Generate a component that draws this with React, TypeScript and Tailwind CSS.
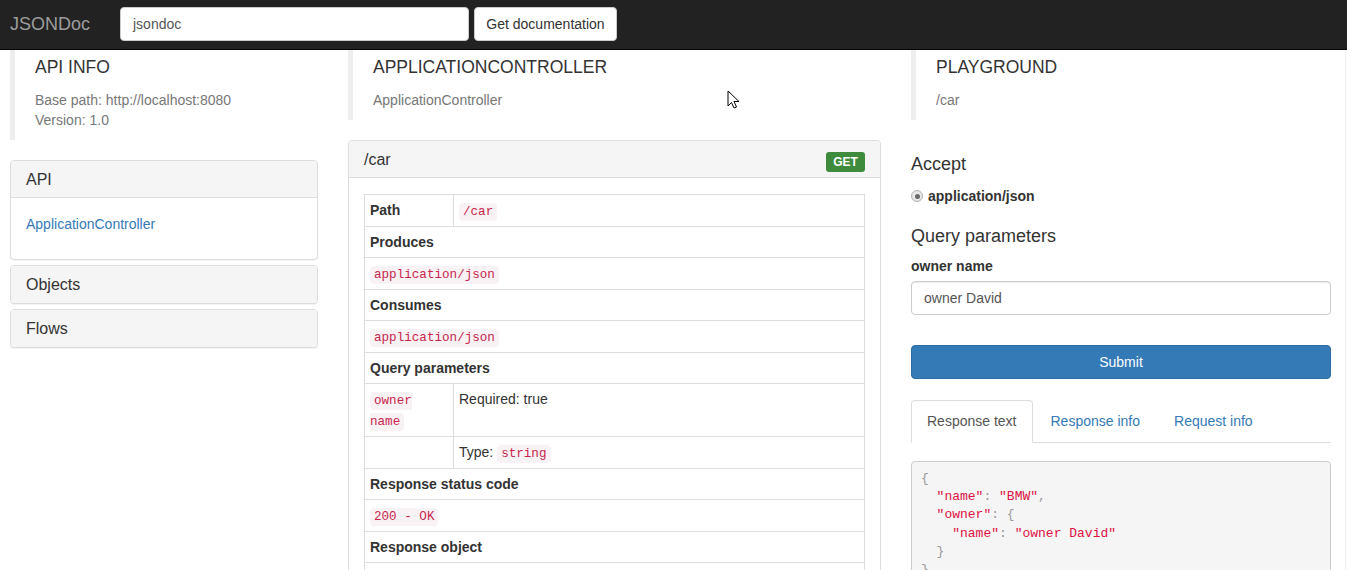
const sans = { fontFamily: '"Liberation Sans", Arial, sans-serif' }

function Code({ children }: { children: React.ReactNode }) {
  return (
    <code className="rounded-[4px] bg-[#f9f2f4] px-[4px] py-[2px] font-['Liberation_Mono',monospace] text-[12.6px] leading-[18px] text-[#c7254e]">
      {children}
    </code>
  )
}

function Callout({ title, lines }: { title: string; lines: string[] }) {
  return (
    <div className="mb-[20px] border-l-[5px] border-[#eee] pb-[10px] pl-[20px] pt-[7px]">
      <div className="text-[17.5px] leading-[20px] text-[#333]">{title}</div>
      <div className="mt-[13px] text-[14px] leading-[20px] text-[#777]">
        {lines.map((l) => (
          <div key={l}>{l}</div>
        ))}
      </div>
    </div>
  )
}

function Navbar() {
  return (
    <nav className="flex h-[50px] items-center border-b border-[#080808] bg-[#222] pb-[1px]">
      <div className="w-[120px] pl-[10px] text-[18px] text-[#9d9d9d]">JSONDoc</div>
      <div className="flex h-[34px] w-[349px] items-center rounded-[4px] border border-[#ccc] bg-white px-[12px] text-[14px] text-[#555]">
        jsondoc
      </div>
      <button className="ml-[5px] h-[34px] w-[143px] rounded-[4px] border border-[#ccc] bg-white text-[14px] text-[#333]">
        Get documentation
      </button>
    </nav>
  )
}

function SidePanel({ title, children }: { title: string; children?: React.ReactNode }) {
  return (
    <div className="mt-[5px] overflow-hidden rounded-[4px] border border-[#ddd] bg-white shadow-[0_1px_1px_rgba(0,0,0,0.05)] first:mt-0">
      <div className={`flex h-[37px] items-center bg-[#f5f5f5] px-[15px] pt-[1px] text-[16px] text-[#333] ${children ? 'border-b border-[#ddd]' : ''}`}>
        {title}
      </div>
      {children}
    </div>
  )
}

const th = 'border border-[#ddd] px-[5px] py-[5px] text-left align-top font-bold leading-[20px]'
const td = 'border border-[#ddd] px-[5px] py-[5px] align-top leading-[20px]'

function MethodPanel() {
  return (
    <div className="rounded-[4px] border border-[#ddd] bg-white shadow-[0_1px_1px_rgba(0,0,0,0.05)]">
      <div className="flex h-[37px] items-center justify-between rounded-t-[4px] border-b border-[#ddd] bg-[#f5f5f5] px-[15px]">
        <span className="pt-[1px] text-[16px] text-[#333]">/car</span>
        <span className="mt-[6px] flex h-[20px] w-[39px] items-center justify-center rounded-[3px] bg-[#3e8b3e] text-[12px] font-bold text-white">
          GET
        </span>
      </div>
      <div className="px-[15px] pb-[15px] pt-[16px]">
        <table className="w-full border-collapse text-[14px] text-[#333]">
          <tbody>
            <tr>
              <th className={`${th} w-[89px]`}>Path</th>
              <td className={td}>
                <Code>/car</Code>
              </td>
            </tr>
            <tr>
              <th className={th} colSpan={2}>Produces</th>
            </tr>
            <tr>
              <td className={td} colSpan={2}>
                <Code>application/json</Code>
              </td>
            </tr>
            <tr>
              <th className={th} colSpan={2}>Consumes</th>
            </tr>
            <tr>
              <td className={td} colSpan={2}>
                <Code>application/json</Code>
              </td>
            </tr>
            <tr>
              <th className={th} colSpan={2}>Query parameters</th>
            </tr>
            <tr>
              <td className={td}>
                <Code>owner name</Code>
              </td>
              <td className={td}>Required: true</td>
            </tr>
            <tr>
              <td className={td}></td>
              <td className={td}>
                Type: <Code>string</Code>
              </td>
            </tr>
            <tr>
              <th className={th} colSpan={2}>Response status code</th>
            </tr>
            <tr>
              <td className={td} colSpan={2}>
                <Code>200 - OK</Code>
              </td>
            </tr>
            <tr>
              <th className={th} colSpan={2}>Response object</th>
            </tr>
            <tr>
              <td className={td} colSpan={2}>
                {'\u00a0'}
              </td>
            </tr>
          </tbody>
        </table>
      </div>
    </div>
  )
}

const p = 'text-[#999]'
const s = 'text-[#d14]'

function Playground() {
  return (
    <div className="pt-[14px] text-[14px] text-[#333]">
      <div className="text-[18px] leading-[20px]">Accept</div>
      <label className="mt-[12px] flex items-center leading-[20px]">
        <span className="mr-[5px] flex h-[12px] w-[12px] items-center justify-center rounded-full border border-[#b0b0b0] bg-[#e8e8e8]">
          <span className="h-[5px] w-[5px] rounded-full bg-[#6a6a6a]" />
        </span>
        <span className="font-bold">application/json</span>
      </label>
      <div className="mt-[20px] text-[18px] leading-[20px]">Query parameters</div>
      <div className="mt-[10px] font-bold leading-[20px]">owner name</div>
      <div className="mt-[5px] flex h-[34px] items-center rounded-[4px] border border-[#ccc] px-[12px] text-[#555] shadow-[inset_0_1px_1px_rgba(0,0,0,0.075)]">
        owner David
      </div>
      <button className="mt-[30px] h-[34px] w-full rounded-[4px] border border-[#2e6da4] bg-[#337ab7] text-white">
        Submit
      </button>
      <div className="mt-[21px] flex border-b border-[#ddd]">
        <div className="-mb-px rounded-t-[4px] border border-[#ddd] border-b-white bg-white px-[15px] py-[10px] leading-[20px] text-[#555]">
          Response text
        </div>
        <div className="ml-[2px] border border-transparent px-[15px] py-[10px] leading-[20px] text-[#337ab7]">
          Response info
        </div>
        <div className="ml-[2px] border border-transparent px-[15px] py-[10px] leading-[20px] text-[#337ab7]">
          Request info
        </div>
      </div>
      <pre className="mt-[18px] rounded-[4px] border border-[#ccc] bg-[#f5f5f5] px-[9px] pb-[10px] pt-[8px] font-['Liberation_Mono',monospace] text-[13px] leading-[18.2px]">
        <span className={p}>{'{'}</span>
        {'\n  '}
        <span className={s}>"name"</span>
        <span className={p}>: </span>
        <span className={s}>"BMW"</span>
        <span className={p}>,</span>
        {'\n  '}
        <span className={s}>"owner"</span>
        <span className={p}>: {'{'}</span>
        {'\n    '}
        <span className={s}>"name"</span>
        <span className={p}>: </span>
        <span className={s}>"owner David"</span>
        {'\n  '}
        <span className={p}>{'}'}</span>
        {'\n'}
        <span className={p}>{'}'}</span>
      </pre>
    </div>
  )
}

function Cursor() {
  return (
    <svg className="absolute left-[727px] top-[90px]" width="14" height="20" viewBox="0 0 14 20">
      <path d="M1 1 L1 16 L4.5 12.5 L7 18 L9.5 17 L7 11.5 L12 11.5 Z" fill="white" stroke="black" strokeWidth="1" strokeLinejoin="round" />
    </svg>
  )
}

export default function App() {
  return (
    <div className="relative min-h-[570px] bg-white text-[14px] text-[#333]" style={sans}>
      <Navbar />
      <div className="flex w-[1346px] gap-[30px] border-r border-[#eee] pl-[10px]">
        <div className="w-[308px]">
          <Callout title="API INFO" lines={['Base path: http://localhost:8080', 'Version: 1.0']} />
          <div>
            <SidePanel title="API">
              <div className="h-[61px] px-[15px] pt-[16px] leading-[20px] text-[#337ab7]">ApplicationController</div>
            </SidePanel>
            <SidePanel title="Objects" />
            <SidePanel title="Flows" />
          </div>
        </div>
        <div className="w-[533px]">
          <Callout title="APPLICATIONCONTROLLER" lines={['ApplicationController']} />
          <MethodPanel />
        </div>
        <div className="w-[420px]">
          <Callout title="PLAYGROUND" lines={['/car']} />
          <Playground />
        </div>
      </div>
      <Cursor />
    </div>
  )
}
